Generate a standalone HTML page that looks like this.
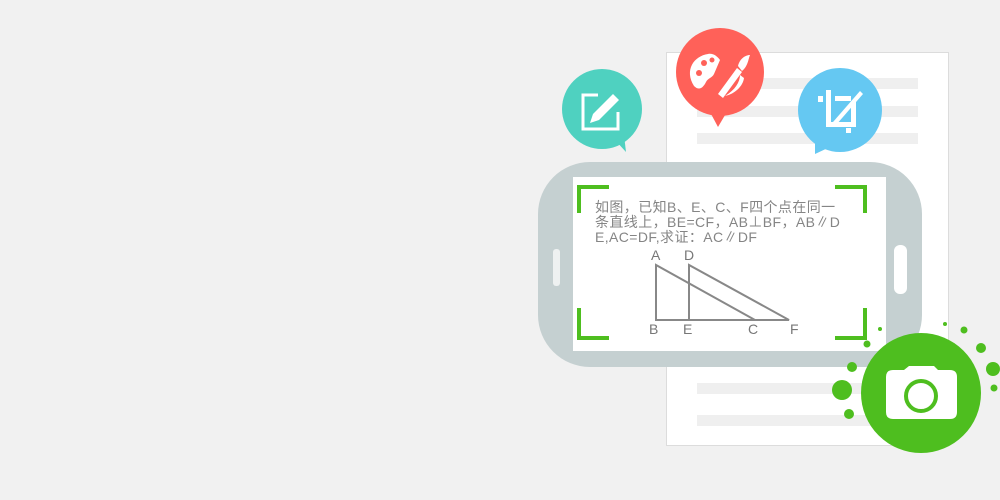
<!DOCTYPE html>
<html><head><meta charset="utf-8"><style>
body{margin:0;width:1000px;height:500px;background:#f1f1f1;position:relative;overflow:hidden;font-family:"Liberation Sans","Noto Sans CJK SC",sans-serif}
.a{position:absolute}
.ln{position:absolute;background:#efefef;height:11px;left:697px;width:221px}
.g{position:absolute;background:#4ebe1f}
.t{position:absolute;left:595px;font-size:14px;color:#858585;line-height:15px;white-space:nowrap;letter-spacing:0.4px}
</style></head><body>
<div class="a" style="left:666px;top:52px;width:281px;height:392px;background:#fff;border:1px solid #dcdcdc"></div>
<div class="ln" style="top:78px"></div><div class="ln" style="top:106px"></div><div class="ln" style="top:133px"></div>
<div class="ln" style="top:383px"></div><div class="ln" style="top:415px"></div>
<div class="a" style="left:538px;top:162px;width:384px;height:205px;background:#c5d0d1;border-radius:52px"></div>
<div class="a" style="left:573px;top:177px;width:313px;height:174px;background:#fff"></div>
<div class="a" style="left:553px;top:249px;width:7px;height:37px;background:#eef1f1;border-radius:3px"></div>
<div class="a" style="left:894px;top:245px;width:13px;height:49px;background:#fff;border-radius:6px"></div>
<div class="g" style="left:577px;top:185px;width:32px;height:4px"></div><div class="g" style="left:577px;top:185px;width:4px;height:28px"></div>
<div class="g" style="left:835px;top:185px;width:32px;height:4px"></div><div class="g" style="left:863px;top:185px;width:4px;height:28px"></div>
<div class="g" style="left:577px;top:336px;width:32px;height:4px"></div><div class="g" style="left:577px;top:308px;width:4px;height:32px"></div>
<div class="g" style="left:835px;top:336px;width:32px;height:4px"></div><div class="g" style="left:863px;top:308px;width:4px;height:32px"></div>
<div class="t" style="top:200px">如图，已知B、E、C、F四个点在同一</div>
<div class="t" style="top:215px">条直线上，BE=CF，AB⊥BF，AB∥D</div>
<div class="t" style="top:230px">E,AC=DF,求证：AC∥DF</div>
<svg class="a" style="left:0;top:0" width="1000" height="500">
<g stroke="#888" stroke-width="2" fill="none"><path d="M656 265V320H755ZM689 265V320H789Z"/></g>
<g font-family="Liberation Sans" font-size="14" fill="#777"><text x="651" y="260">A</text><text x="684" y="260">D</text><text x="649" y="334">B</text><text x="683" y="334">E</text><text x="748" y="334">C</text><text x="790" y="334">F</text></g>
<circle cx="602" cy="109" r="40" fill="#4fd1c0"/><path d="M615 140L626 152L624 135Z" fill="#4fd1c0"/>
<g fill="none" stroke="#fff" stroke-width="3"><path d="M598 95H583V129H618V112"/></g>
<path d="M590 123L593 114L613 94L619 100L599 120Z" fill="#fff"/>
<circle cx="720" cy="72" r="44" fill="#ff6159"/><path d="M710 112L718 127L728 110Z" fill="#ff6159"/>
<path d="M708 54C694 56 684 70 694 86C700 92 704 86 706 82C708 78 712 78 714 74L720 60C717 56 713 53 708 54Z" fill="#fff"/>
<g fill="#ff6159"><circle cx="699" cy="73" r="3"/><circle cx="704" cy="63" r="3"/><circle cx="712" cy="60" r="2.5"/></g>
<path d="M718 94L737 68L742 72L723 98Z" fill="#fff"/><path d="M738 66C740 58 746 55 750 55C748 60 748 66 742 71Z" fill="#fff"/>
<path d="M725 96C735 90 740 82 740 75L744 78C743 86 735 94 725 96Z" fill="#fff"/>
<circle cx="840" cy="110" r="42" fill="#65c8f2"/><path d="M815 140L815 154L830 147Z" fill="#65c8f2"/>
<g fill="#fff"><rect x="818" y="96" width="5" height="6"/><rect x="826" y="90" width="5" height="37"/><rect x="826" y="122" width="30" height="5"/><rect x="851" y="102" width="5" height="25"/><rect x="835" y="96" width="16" height="5"/><rect x="846" y="128" width="5" height="5"/><path d="M833 122L860 91L863 94L836 125Z"/></g>
<g fill="#4ebe1f"><circle cx="921" cy="393" r="60"/><circle cx="842" cy="390" r="10"/><circle cx="852" cy="367" r="5"/><circle cx="849" cy="414" r="5"/><circle cx="867" cy="344" r="3.5"/><circle cx="880" cy="329" r="2"/><circle cx="945" cy="324" r="2"/><circle cx="964" cy="330" r="3.5"/><circle cx="981" cy="348" r="5"/><circle cx="993" cy="369" r="7"/><circle cx="994" cy="388" r="3.5"/></g>
<path d="M886 377Q886 370 893 370H904L909 366H934L938 370H950Q957 370 957 377V412Q957 419 950 419H893Q886 419 886 412Z" fill="#fff"/>
<circle cx="921" cy="396" r="15" fill="none" stroke="#4ebe1f" stroke-width="4"/>
</svg>
</body></html>
